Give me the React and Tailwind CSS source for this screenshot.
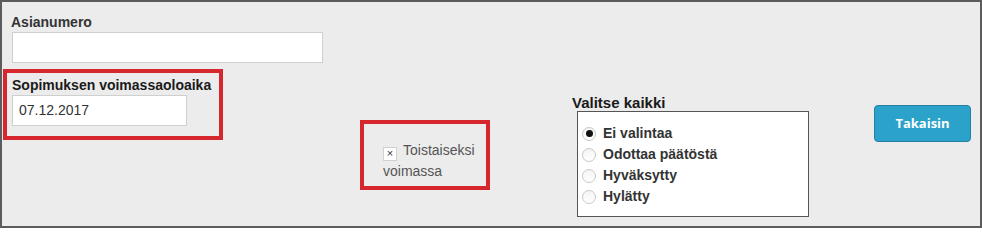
const options = ["Ei valintaa", "Odottaa päätöstä", "Hyväksytty", "Hylätty"];

const Radio = ({ checked, label }) => (
  <label className="flex items-center h-[21px]">
    <span className="w-[14px] h-[14px] rounded-full border border-[#c9c9c9] bg-gradient-to-b from-[#f4f4f4] to-white flex items-center justify-center mr-[7px]">
      {checked && <span className="w-[7px] h-[7px] rounded-full bg-[#111]"></span>}
    </span>
    <span className="text-[14px] font-bold text-[#333] leading-[21px]">{label}</span>
  </label>
);

const App = () => {
  return (
    <div
      className="w-[982px] h-[228px] border-2 border-[#5c5c5c] bg-[#ececec] flex items-start"
      style={{ fontFamily: '"Liberation Sans", Arial, sans-serif' }}
    >
      {/* left column */}
      <div className="ml-[1px] w-[320px] flex flex-col">
        <div className="ml-[8px] mt-[10px]">
          <div className="text-[14px] font-bold leading-[20px] text-[#333]">Asianumero</div>
          <div className="ml-[1px] w-[311px] h-[31px] bg-white border border-[#cfcfcf]"></div>
        </div>
        <div className="mt-[6px] w-[220px] border-4 border-[#d6262e] pl-[5px] pt-[2px] pb-[10px]">
          <div className="text-[14px] font-bold leading-[20px] text-[#1a1a1a]">
            Sopimuksen voimassaoloaika
          </div>
          <div className="w-[175px] h-[31px] bg-white border border-[#cfcfcf] pl-[6px] flex items-center text-[14px] text-[#333]">
            07.12.2017
          </div>
        </div>
      </div>

      {/* middle */}
      <div className="ml-[37px] mt-[118px] w-[130px] h-[70px] border-4 border-[#d6262e] pl-[19px] pt-[16px]">
        <div className="text-[14px] leading-[20px] text-[#555] w-[100px]">
          <span className="inline-flex items-center justify-center w-[14px] h-[14px] bg-white border border-[#d0d0d0] text-[11px] leading-none text-[#333] mr-[6px] align-[-2px]">
            ×
          </span>
          Toistaiseksi voimassa
        </div>
      </div>

      {/* radio group */}
      <div className="ml-[82px] mt-[92px] flex flex-col">
        <div className="text-[15px] font-bold leading-[17px] text-[#1a1a1a]">Valitse kaikki</div>
        <div className="ml-[5px] w-[232px] h-[106px] bg-white border border-[#555] pl-[4px] pt-[11px]">
          {options.map((o, i) => (
            <Radio key={o} label={o} checked={i === 0} />
          ))}
        </div>
      </div>

      {/* button */}
      <button
        className="ml-[65px] mt-[103px] w-[97px] h-[37px] rounded-[4px] bg-[#2aa2c9] border border-[#2580a3] text-white text-[13px] font-bold"
        style={{ fontFamily: '"Open Sans", sans-serif' }}
      >
        Takaisin
      </button>
    </div>
  );
};

export default App;
